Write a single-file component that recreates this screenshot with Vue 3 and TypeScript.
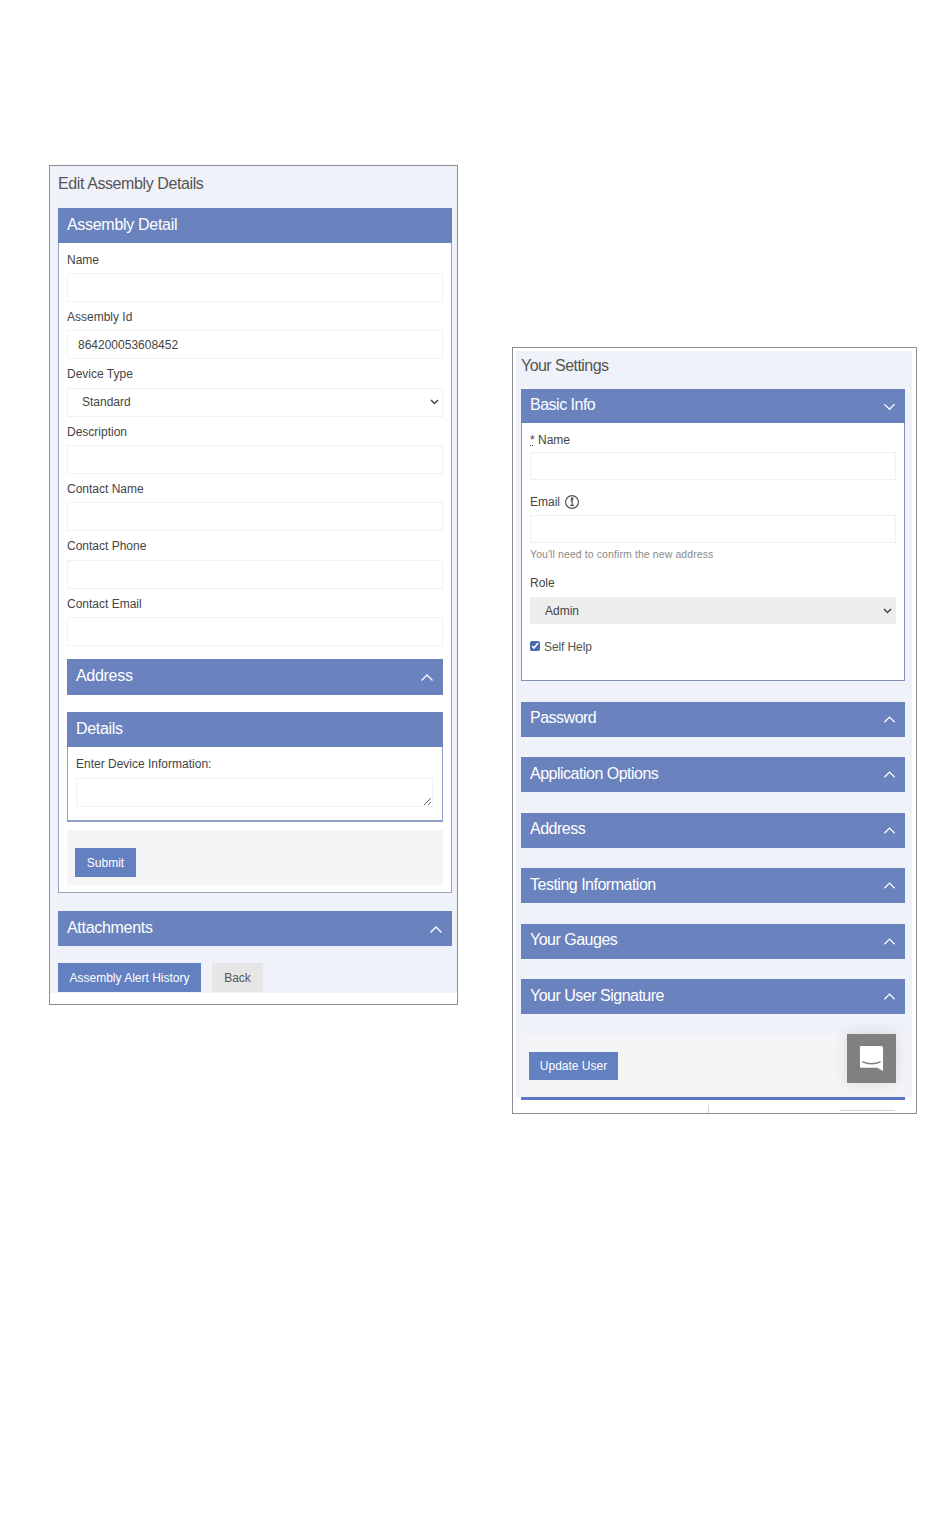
<script setup lang="ts">
const assemblyFields = [
  { label: 'Name', value: '' },
  { label: 'Assembly Id', value: '864200053608452' },
  { label: 'Device Type', options: ['Standard'] },
  { label: 'Description', value: '' },
  { label: 'Contact Name', value: '' },
  { label: 'Contact Phone', value: '' },
  { label: 'Contact Email', value: '' }
]

const settingsSections = [
  'Password',
  'Application Options',
  'Address',
  'Testing Information',
  'Your Gauges',
  'Your User Signature'
]
</script>

<template>
  <div class="page">
    <section class="assembly-panel">
      <div class="assembly-inner">
        <h1 class="page-title">Edit Assembly Details</h1>
        <div class="bar bar-tall">Assembly Detail</div>
        <div class="card-body assembly-body">
          <div v-for="field in assemblyFields" :key="field.label" class="field">
            <label class="label">{{ field.label }}</label>
            <select v-if="field.options" class="control select">
              <option v-for="opt in field.options" :key="opt">{{ opt }}</option>
            </select>
            <input v-else class="control" type="text" :value="field.value" />
          </div>

          <div class="bar bar-tall address-bar">
            <span>Address</span>
            <svg class="chevron" viewBox="0 0 14 9"><polyline points="1.5,7.5 7,2 12.5,7.5" /></svg>
          </div>

          <div class="bar bar-tall details-bar">Details</div>
          <div class="details-body">
            <label class="label details-label">Enter Device Information:</label>
            <textarea class="control textarea"></textarea>
          </div>

          <div class="form-footer assembly-footer">
            <button class="btn btn-primary submit-btn" type="button">Submit</button>
          </div>
        </div>

        <div class="bar bar-tall attachments-bar">
          <span>Attachments</span>
          <svg class="chevron" viewBox="0 0 14 9"><polyline points="1.5,7.5 7,2 12.5,7.5" /></svg>
        </div>

        <div class="actions">
          <button class="btn btn-primary history-btn" type="button">Assembly Alert History</button>
          <button class="btn btn-muted back-btn" type="button">Back</button>
        </div>
      </div>
    </section>

    <section class="settings-panel">
      <div class="settings-inner">
        <h1 class="page-title settings-title">Your Settings</h1>
        <div class="bar settings-head">
          <span>Basic Info</span>
          <svg class="chevron" viewBox="0 0 14 9"><polyline points="1.5,2 7,7.5 12.5,2" /></svg>
        </div>
        <div class="card-body settings-body">
          <label class="label"><abbr title="required">*</abbr> Name</label>
          <input class="control settings-input" type="text" />

          <label class="label email-label">
            Email
            <svg class="info-icon" viewBox="0 0 16 16">
              <circle cx="8" cy="8" r="6.4" />
              <path d="M6.4 6.800h1.800v4.400M6.200 11.400h3.800M7.500 4h1.300v1.300H7.500z" />
            </svg>
          </label>
          <input class="control settings-input email-input" type="text" />
          <p class="help">You'll need to confirm the new address</p>

          <label class="label role-label">Role</label>
          <select class="control select role-select" disabled>
            <option>Admin</option>
          </select>

          <label class="check-row">
            <input type="checkbox" checked />
            <span>Self Help</span>
          </label>
        </div>

        <div v-for="name in settingsSections" :key="name" class="bar settings-head settings-bar">
          <span>{{ name }}</span>
          <svg class="chevron" viewBox="0 0 14 9"><polyline points="1.5,7.5 7,2 12.5,7.5" /></svg>
        </div>

        <div class="form-footer settings-footer">
          <button class="btn btn-primary update-btn" type="button">Update User</button>
        </div>
      </div>

      <div class="rule"></div>
      <div class="cutoff">
        <span class="cutoff-tick"></span>
        <span class="cutoff-line"></span>
      </div>

      <div class="chat-widget">
        <svg viewBox="0 0 26 28" width="25" height="27">
          <path d="M2 1h21a2 2 0 0 1 2 2v24l-6-3.500H2a1 1 0 0 1-1-1V2a1 1 0 0 1 1-1z" fill="#fff" />
          <path d="M4 17.500c5 2.600 13 2.600 18 0" fill="none" stroke="#808080" stroke-width="1.400" stroke-linecap="round" />
        </svg>
      </div>
    </section>
  </div>
</template>

<style scoped>
.page {
  display: flex;
  align-items: flex-start;
  min-height: 1538px;
  box-sizing: border-box;
  padding-left: 49px;
  font-family: "Liberation Sans", Arial, sans-serif;
  color: #444;
}

.assembly-panel {
  width: 409px;
  margin-top: 165px;
  box-sizing: border-box;
  border: 1px solid #8d8d94;
  padding-bottom: 11px;
}

.assembly-inner {
  background: #f0f2fa;
  padding: 0 5px 1px 8px;
}

.page-title {
  margin: 0;
  padding: 7px 0 13px;
  font-size: 16px;
  line-height: 22px;
  font-weight: 400;
  letter-spacing: -0.4px;
  color: #555;
}

.bar {
  display: flex;
  align-items: center;
  justify-content: space-between;
  box-sizing: border-box;
  height: 34px;
  padding: 0 9px 1px;
  background: #6a82be;
  color: #fff;
  font-size: 16px;
  letter-spacing: -0.3px;
}

.bar-tall {
  height: 35px;
}

.settings-head {
  padding-bottom: 2px;
  letter-spacing: -0.5px;
}

.chevron {
  flex: none;
  width: 14px;
  height: 9px;
  margin-top: 3px;
  fill: none;
  stroke: #fff;
  stroke-width: 1.300;
}

.settings-head .chevron {
  width: 13px;
  margin-top: 2px;
}

.card-body {
  box-sizing: border-box;
  background: #fff;
  border: 1px solid #97a3bd;
  border-top: 0;
}

.assembly-body {
  padding: 9.400px 8px 7px;
}

.field {
  margin-bottom: 7px;
}

.label {
  display: block;
  height: 16px;
  font-size: 12px;
  line-height: 16px;
  color: #444;
}

.field .label {
  margin-bottom: 5.400px;
}

.field:first-child .label {
  margin-bottom: 4.400px;
}

.control {
  display: block;
  width: 100%;
  height: 29px;
  box-sizing: border-box;
  border: 1px solid #f1f1f3;
  background: #fff;
  padding: 0 10px;
  font-family: inherit;
  font-size: 12px;
  color: #444;
  outline: none;
}

.select {
  appearance: none;
  padding-left: 14px;
  background-image: url("data:image/svg+xml,%3Csvg xmlns='http://www.w3.org/2000/svg' width='9' height='6'%3E%3Cpolyline points='1,1 4.500,4.500 8,1' fill='none' stroke='%23444' stroke-width='1.500'/%3E%3C/svg%3E");
  background-repeat: no-repeat;
  background-position: right 3px center;
}

.address-bar {
  height: 36px;
  margin-top: 13px;
  margin-bottom: 17px;
  padding-bottom: 3px;
}

.details-body {
  height: 75px;
  box-sizing: border-box;
  border: 1px solid #8fa0c5;
  border-top: 0;
  border-bottom-width: 2px;
  padding: 9px 9px 0 8px;
}

.details-label {
  margin-bottom: 6px;
}

.textarea {
  resize: vertical;
}

.form-footer {
  background: #f5f5f7;
}

.assembly-footer {
  height: 55px;
  box-sizing: border-box;
  margin-top: 8px;
  padding: 18px 8px 0;
}

.btn {
  display: block;
  height: 29px;
  border: 0;
  padding: 0;
  font-family: inherit;
  font-size: 12px;
  text-align: center;
}

.btn-primary {
  background: #6380c1;
  color: #fff;
}

.btn-muted {
  background: #e6e6e6;
  color: #555;
}

.submit-btn {
  width: 61px;
}

.attachments-bar {
  margin-top: 18px;
}

.actions {
  display: flex;
  gap: 11px;
  margin-top: 17px;
}

.history-btn {
  width: 143px;
}

.back-btn {
  width: 51px;
}

.settings-panel {
  position: relative;
  width: 405px;
  margin-top: 347px;
  margin-left: 54px;
  box-sizing: border-box;
  border: 1px solid #8d8d94;
  padding: 3px 4px 0 3px;
}

.settings-inner {
  background: #f0f2fa;
  padding: 0 7px 1px 5px;
}

.settings-title {
  padding: 4px 0 12px;
  letter-spacing: -0.55px;
}

.settings-body {
  height: 258px;
  border-color: #7f93b8;
  padding: 9px 8px 0;
}

.settings-input {
  height: 28px;
  margin-top: 4px;
}

.email-label {
  display: flex;
  align-items: center;
  gap: 4px;
  margin-top: 14px;
}

.email-input {
  margin-top: 5px;
}

.info-icon {
  width: 16px;
  height: 16px;
  fill: none;
  stroke: #555;
  stroke-width: 1.200;
}

.help {
  margin: 3px 0 0;
  height: 16px;
  font-size: 10.500px;
  line-height: 16px;
  color: #8a8a8a;
  letter-spacing: 0.1px;
}

.role-label {
  margin-top: 13px;
}

.role-select {
  height: 27px;
  margin-top: 6px;
  background-color: #eee;
  border-color: #eee;
  opacity: 1;
}

.check-row {
  display: flex;
  align-items: center;
  gap: 4px;
  height: 16px;
  margin-top: 15px;
  font-size: 12px;
  letter-spacing: -0.1px;
  color: #555;
}

.check-row input {
  width: 10px;
  height: 10px;
  margin: -2px 0 0;
  accent-color: #4a69ad;
}

.settings-bar {
  height: 35px;
  margin-top: 20.500px;
}

.settings-footer {
  height: 62px;
  box-sizing: border-box;
  margin-top: 19.500px;
  padding: 18px 8px 0;
}

.update-btn {
  width: 89px;
  height: 28px;
}

.rule {
  height: 3px;
  margin: 0 7px 0 5px;
  background: #5b78bf;
}

.cutoff {
  display: flex;
  align-items: flex-end;
  height: 13px;
  margin-left: 192px;
}

.cutoff-tick {
  width: 1px;
  height: 8px;
  background: #d4d4d4;
}

.cutoff-line {
  width: 55px;
  height: 1px;
  margin-left: 131px;
  margin-bottom: 2px;
  background: #d4d4d4;
}

.chat-widget {
  position: absolute;
  right: 20px;
  bottom: 30px;
  width: 49px;
  height: 49px;
  display: flex;
  align-items: center;
  justify-content: center;
  background: #808080;
  box-shadow: 0 0 16px rgba(0, 0, 0, 0.12);
}
</style>

<style>
body {
  background: #fff;
}
</style>
